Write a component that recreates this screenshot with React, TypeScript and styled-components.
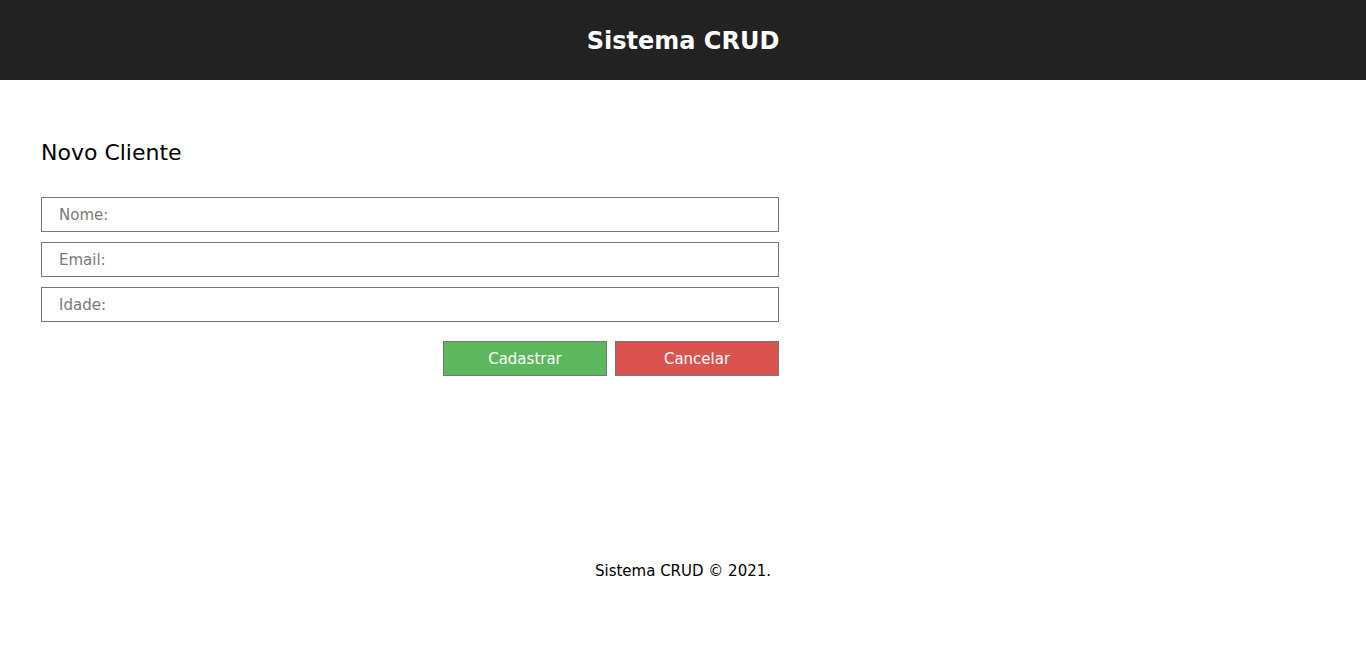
import React from "react";
import styled, { createGlobalStyle } from "styled-components";

export default function App() {
  return (
    <>
      <GlobalStyle />
      <Page>
        <Header>
          <Title>Sistema CRUD</Title>
        </Header>
        <Main>
          <Form onSubmit={(e) => e.preventDefault()}>
            <FormTitle>Novo Cliente</FormTitle>
            <Field placeholder="Nome:" />
            <Field placeholder="Email:" />
            <Field placeholder="Idade:" />
            <Actions>
              <ActionButton type="submit" variant="success">
                Cadastrar
              </ActionButton>
              <ActionButton type="button" variant="danger">
                Cancelar
              </ActionButton>
            </Actions>
          </Form>
        </Main>
        <Footer>Sistema CRUD © 2021.</Footer>
      </Page>
    </>
  );
}

const GlobalStyle = createGlobalStyle`
  * {
    box-sizing: border-box;
  }

  body {
    margin: 0;
    background: #fff;
    font-family: "DejaVu Sans", Verdana, sans-serif;
  }
`;

const Page = styled.div`
  display: flex;
  flex-direction: column;
  min-height: 657px;
`;

const Header = styled.header`
  height: 80px;
  padding-top: 2px;
  background-color: #222222;
  display: flex;
  align-items: center;
  justify-content: center;
`;

const Title = styled.h1`
  margin: 0;
  color: #fff;
  font-size: 24px;
  font-weight: 700;
`;

const Main = styled.main`
  padding: 61px 41px 0;
  height: 482px;
`;

const Form = styled.form`
  width: 738px;
  display: flex;
  flex-direction: column;
  gap: 10px;
`;

const FormTitle = styled.h2`
  margin: 0 0 22px;
  font-size: 22px;
  font-weight: 400;
  color: #000;
  line-height: 24px;
`;

const Field = styled.input`
  height: 35px;
  width: 100%;
  border: 1px solid #777;
  padding: 0 17px;
  font-family: inherit;
  font-size: 15px;
  outline: none;

  &::placeholder {
    color: #7a7a7a;
  }
`;

const Actions = styled.div`
  display: flex;
  justify-content: flex-end;
  gap: 8px;
  margin-top: 9px;
`;

const ActionButton = styled.button<{ variant: "success" | "danger" }>`
  width: 164px;
  height: 35px;
  border: 1px solid #777;
  color: #fff;
  font-family: inherit;
  font-size: 15px;
  cursor: pointer;
  background-color: ${(p) => (p.variant === "success" ? "#5cb85c" : "#d9534f")};

  &:hover {
    opacity: 0.9;
  }
`;

const Footer = styled.footer`
  text-align: center;
  font-size: 15px;
  font-weight: 500;
  color: #000;
`;
